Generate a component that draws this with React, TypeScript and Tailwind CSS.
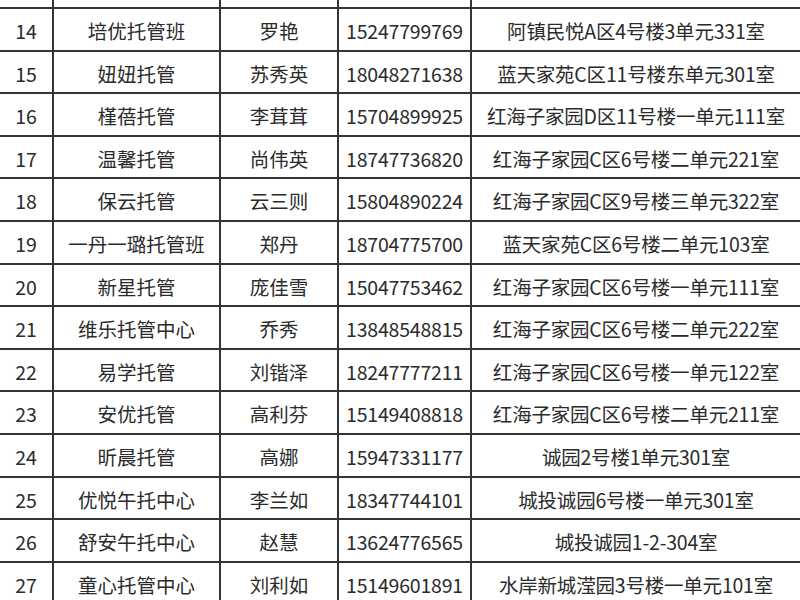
const rows = [
  { no: "14", name: "培优托管班", person: "罗艳", phone: "15247799769", addr: "阿镇民悦A区4号楼3单元331室" },
  { no: "15", name: "妞妞托管", person: "苏秀英", phone: "18048271638", addr: "蓝天家苑C区11号楼东单元301室" },
  { no: "16", name: "槿蓓托管", person: "李茸茸", phone: "15704899925", addr: "红海子家园D区11号楼一单元111室" },
  { no: "17", name: "温馨托管", person: "尚伟英", phone: "18747736820", addr: "红海子家园C区6号楼二单元221室" },
  { no: "18", name: "保云托管", person: "云三则", phone: "15804890224", addr: "红海子家园C区9号楼三单元322室" },
  { no: "19", name: "一丹一璐托管班", person: "郑丹", phone: "18704775700", addr: "蓝天家苑C区6号楼二单元103室" },
  { no: "20", name: "新星托管", person: "庞佳雪", phone: "15047753462", addr: "红海子家园C区6号楼一单元111室" },
  { no: "21", name: "维乐托管中心", person: "乔秀", phone: "13848548815", addr: "红海子家园C区6号楼二单元222室" },
  { no: "22", name: "易学托管", person: "刘锴泽", phone: "18247777211", addr: "红海子家园C区6号楼一单元122室" },
  { no: "23", name: "安优托管", person: "高利芬", phone: "15149408818", addr: "红海子家园C区6号楼二单元211室" },
  { no: "24", name: "昕晨托管", person: "高娜", phone: "15947331177", addr: "诚园2号楼1单元301室" },
  { no: "25", name: "优悦午托中心", person: "李兰如", phone: "18347744101", addr: "城投诚园6号楼一单元301室" },
  { no: "26", name: "舒安午托中心", person: "赵慧", phone: "13624776565", addr: "城投诚园1-2-304室" },
  { no: "27", name: "童心托管中心", person: "刘利如", phone: "15149601891", addr: "水岸新城滢园3号楼一单元101室" },
];

const rowClass =
  "grid grid-cols-[54px_167px_118px_133px_1fr] border-b-2 border-[#353535]";
const cell = "flex items-center justify-center border-r-2 border-[#353535] pt-[3px]";

export default function App() {
  return (
    <div className="w-[800px] h-[600px] overflow-hidden bg-white text-[#2b2b2b] text-[19.5px] leading-none font-['Noto_Sans_CJK_SC',sans-serif]">
      {/* cut-off row above */}
      <div className={`${rowClass} h-[9px]`}>
        <div className="border-r-2 border-[#353535]" />
        <div className="border-r-2 border-[#353535]" />
        <div className="border-r-2 border-[#353535]" />
        <div className="border-r-2 border-[#353535]" />
        <div />
      </div>
      {rows.map((r) => (
        <div key={r.no} className={`${rowClass} h-[42.6px]`}>
          <div className={cell}>{r.no}</div>
          <div className={cell}>{r.name}</div>
          <div className={cell}>{r.person}</div>
          <div className={`${cell} tracking-[-0.2px]`}>{r.phone}</div>
          <div className="flex items-center justify-center pt-[3px] tracking-[-0.2px]">{r.addr}</div>
        </div>
      ))}
    </div>
  );
}
